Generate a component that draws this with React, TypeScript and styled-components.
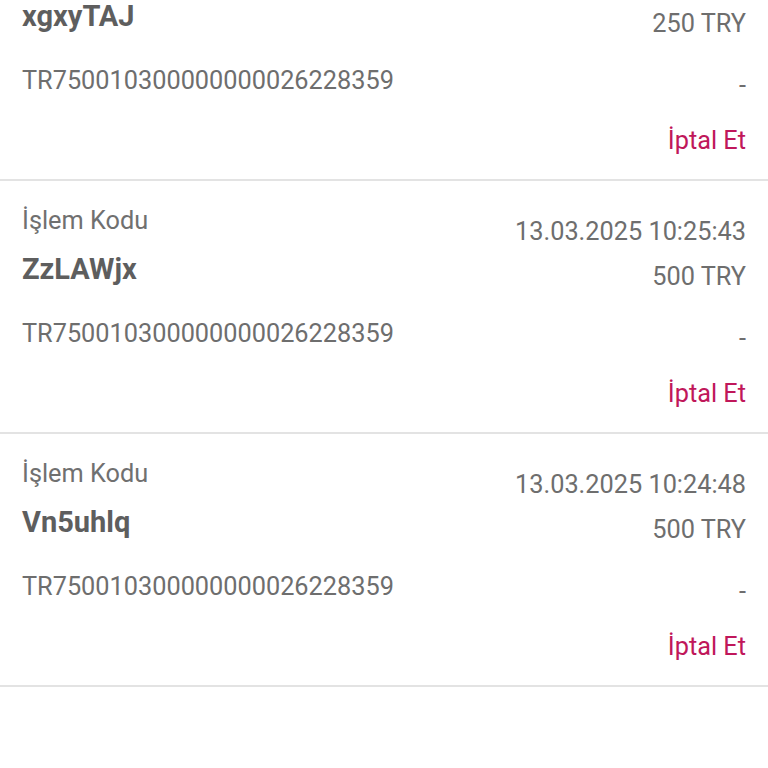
import React from "react";
import styled, { createGlobalStyle } from "styled-components";

interface Transaction {
  code: string;
  date: string;
  amount: string;
  iban: string;
  note: string;
}

const transactions: Transaction[] = [
  {
    code: "xgxyTAJ",
    date: "13.03.2025 10:26:31",
    amount: "250 TRY",
    iban: "TR750010300000000026228359",
    note: "-",
  },
  {
    code: "ZzLAWjx",
    date: "13.03.2025 10:25:43",
    amount: "500 TRY",
    iban: "TR750010300000000026228359",
    note: "-",
  },
  {
    code: "Vn5uhlq",
    date: "13.03.2025 10:24:48",
    amount: "500 TRY",
    iban: "TR750010300000000026228359",
    note: "-",
  },
];

const GlobalStyle = createGlobalStyle`
  html, body {
    margin: 0;
    padding: 0;
    background: #fff;
    overflow: hidden;
  }
  body {
    font-family: Roboto, "Noto Sans", sans-serif;
  }
`;

const App: React.FC = () => {
  return (
    <>
      <GlobalStyle />
      <List>
        {transactions.map((item) => (
          <Card key={item.code}>
            <LeftColumn>
              <Label>İşlem Kodu</Label>
              <Code>{item.code}</Code>
              <Iban>{item.iban}</Iban>
            </LeftColumn>
            <RightColumn>
              <Value>{item.date}</Value>
              <Amount>{item.amount}</Amount>
              <Note>{item.note}</Note>
              <CancelButton type="button">İptal Et</CancelButton>
            </RightColumn>
          </Card>
        ))}
      </List>
    </>
  );
};

// the list is scrolled: the first card starts above the viewport
const List = styled.main`
  width: 768px;
  height: 768px;
  display: flex;
  flex-direction: column;
`;

const Card = styled.section`
  display: flex;
  justify-content: space-between;
  padding: 25px 22px 23px 22px;
  border-bottom: 2px solid #e3e3e3;
  flex-shrink: 0;
  &:first-child {
    margin-top: -72px;
  }
`;

const LeftColumn = styled.div`
  display: flex;
  flex-direction: column;
  align-items: flex-start;
`;

const RightColumn = styled.div`
  display: flex;
  flex-direction: column;
  align-items: flex-end;
  padding-top: 11px;
`;

const Text = styled.span`
  font: 400 25.3px/30px Roboto, sans-serif;
  color: #6e6e6e;
  white-space: nowrap;
`;

const Label = styled(Text)`
  color: #707070;
`;

const Code = styled(Text)`
  margin-top: 18px;
  font-weight: 700;
  font-size: 29px;
  color: #5e5e5e;
`;

const Iban = styled(Text)`
  margin-top: 35px;
`;

const Value = styled(Text)``;

const Amount = styled(Text)`
  margin-top: 15px;
`;

const Note = styled(Text)`
  margin-top: 32px;
`;

const CancelButton = styled.button`
  margin-top: 25px;
  padding: 0;
  border: none;
  background: none;
  font: 400 25.3px/30px Roboto, sans-serif;
  color: #c0175a;
  cursor: pointer;
`;

export default App;
